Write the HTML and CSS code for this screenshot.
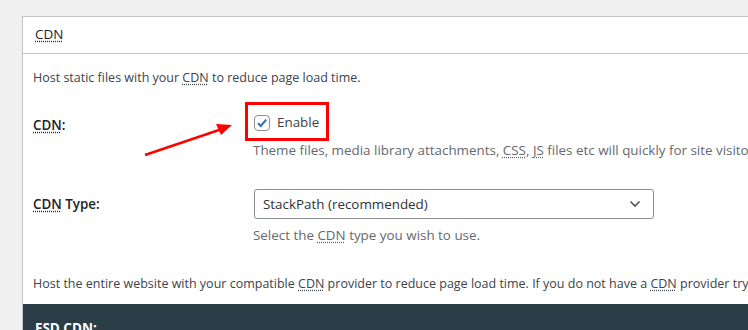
FILE: index.html
```html
<!doctype html>
<html>
  <head>
    <title>CDN settings</title>
    <link rel="stylesheet" href="styles.css">
  </head>
  <body>
    <div class="panel">
      <div class="panel-head"><abbr>CDN</abbr></div>
      <div class="panel-body">
        <p class="intro">Host static files with your <abbr>CDN</abbr> to reduce page load time.</p>

        <div class="row row-enable">
          <div class="label"><abbr>CDN</abbr>:</div>
          <div class="field">
            <div class="highlight">
              <label class="check">
                <span class="box">
                  <svg width="12" height="12" viewBox="0 0 12 12"><path d="M2 6.3 L4.8 9 L10.2 2.6" fill="none" stroke="#2f6fb7" stroke-width="2"/></svg>
                </span>
                Enable
              </label>
            </div>
            <p class="desc">Theme files, media library attachments, <abbr>CSS</abbr>, <abbr>JS</abbr> files etc will quickly for site visitors.</p>
          </div>
          <svg class="arrow" width="100" height="40" viewBox="0 0 100 40">
            <line x1="3" y1="35" x2="80" y2="9" stroke="#f00" stroke-width="2.4"/>
            <polygon points="90,5 74,4 79,15" fill="#f00"/>
          </svg>
        </div>

        <div class="row row-type">
          <div class="label"><abbr>CDN</abbr> Type:</div>
          <div class="field">
            <div class="select">
              <span>StackPath (recommended)</span>
              <svg width="12" height="8" viewBox="0 0 12 8"><path d="M1.5 1.5 L6 6 L10.5 1.5" fill="none" stroke="#50575e" stroke-width="1.6"/></svg>
            </div>
            <p class="desc">Select the <abbr>CDN</abbr> type you wish to use.</p>
          </div>
        </div>

        <p class="intro host">Host the entire website with your compatible <abbr>CDN</abbr> provider to reduce page load time. If you do not have a <abbr>CDN</abbr> provider try StackPath.</p>
      </div>
      <div class="dark-bar"><span>FSD <abbr>CDN</abbr>:</span></div>
    </div>
  </body>
</html>
```

FILE: styles.css
```css
* { margin: 0; padding: 0; box-sizing: border-box; }
body {
  background: #f0f0f1;
  font: 13.4px "Open Sans", "Noto Sans", sans-serif;
  line-height: 18px;
  color: #3c434a;
  overflow: hidden;
  padding: 16px 0 0 22px;
}

abbr {
  text-decoration: underline dotted;
  text-underline-offset: 2px;
}

.panel {
  width: 760px;
  background: #fff;
  border: 1px solid #c3c4c7;
  border-right: none;
}

.panel-head {
  height: 37px;
  border-bottom: 1px solid #c3c4c7;
  padding: 8px 0 0 12px;
  font-size: 13.5px;
  color: #1d2327;
}

.panel-body {
  padding: 15px 0 11px 10px;
}

.intro {
  white-space: nowrap;
  font-size: 12.5px;
}

.row {
  display: flex;
  position: relative;
}

.label {
  width: 220px;
  color: #1d2327;
  font-weight: 600;
}

.row-enable { margin-top: 15px; }
.row-enable .label { padding-top: 14px; }

.highlight {
  width: 84px;
  height: 39px;
  margin-left: -8px;
  border: 3px solid #f00;
  padding: 9px 0 0 6px;
}

.check {
  display: flex;
  align-items: center;
  gap: 7px;
  color: #3c434a;
  line-height: 17px;
}

.box {
  width: 16px;
  height: 16px;
  border: 1px solid #8c8f94;
  border-radius: 4px;
  display: flex;
  align-items: center;
  justify-content: center;
}

.desc {
  color: #646970;
  white-space: nowrap;
}

.arrow {
  position: absolute;
  left: 109px;
  top: 18px;
}

.row-type { margin-top: 30px; }
.row-type .label { padding-top: 6px; }

.select {
  width: 400px;
  height: 30px;
  border: 1px solid #8c8f94;
  border-radius: 3px;
  display: flex;
  align-items: center;
  justify-content: space-between;
  padding: 0 12px 0 8px;
  color: #2c3338;
  margin-left: 1px;
}

.row-type .desc { margin-top: 7px; }

.host { margin-top: 31px; }

.dark-bar {
  background: #2b3e47;
  height: 60px;
  padding: 15px 0 0 12px;
  color: #fff;
  font-weight: 700;
  font-size: 13.5px;
}
```
